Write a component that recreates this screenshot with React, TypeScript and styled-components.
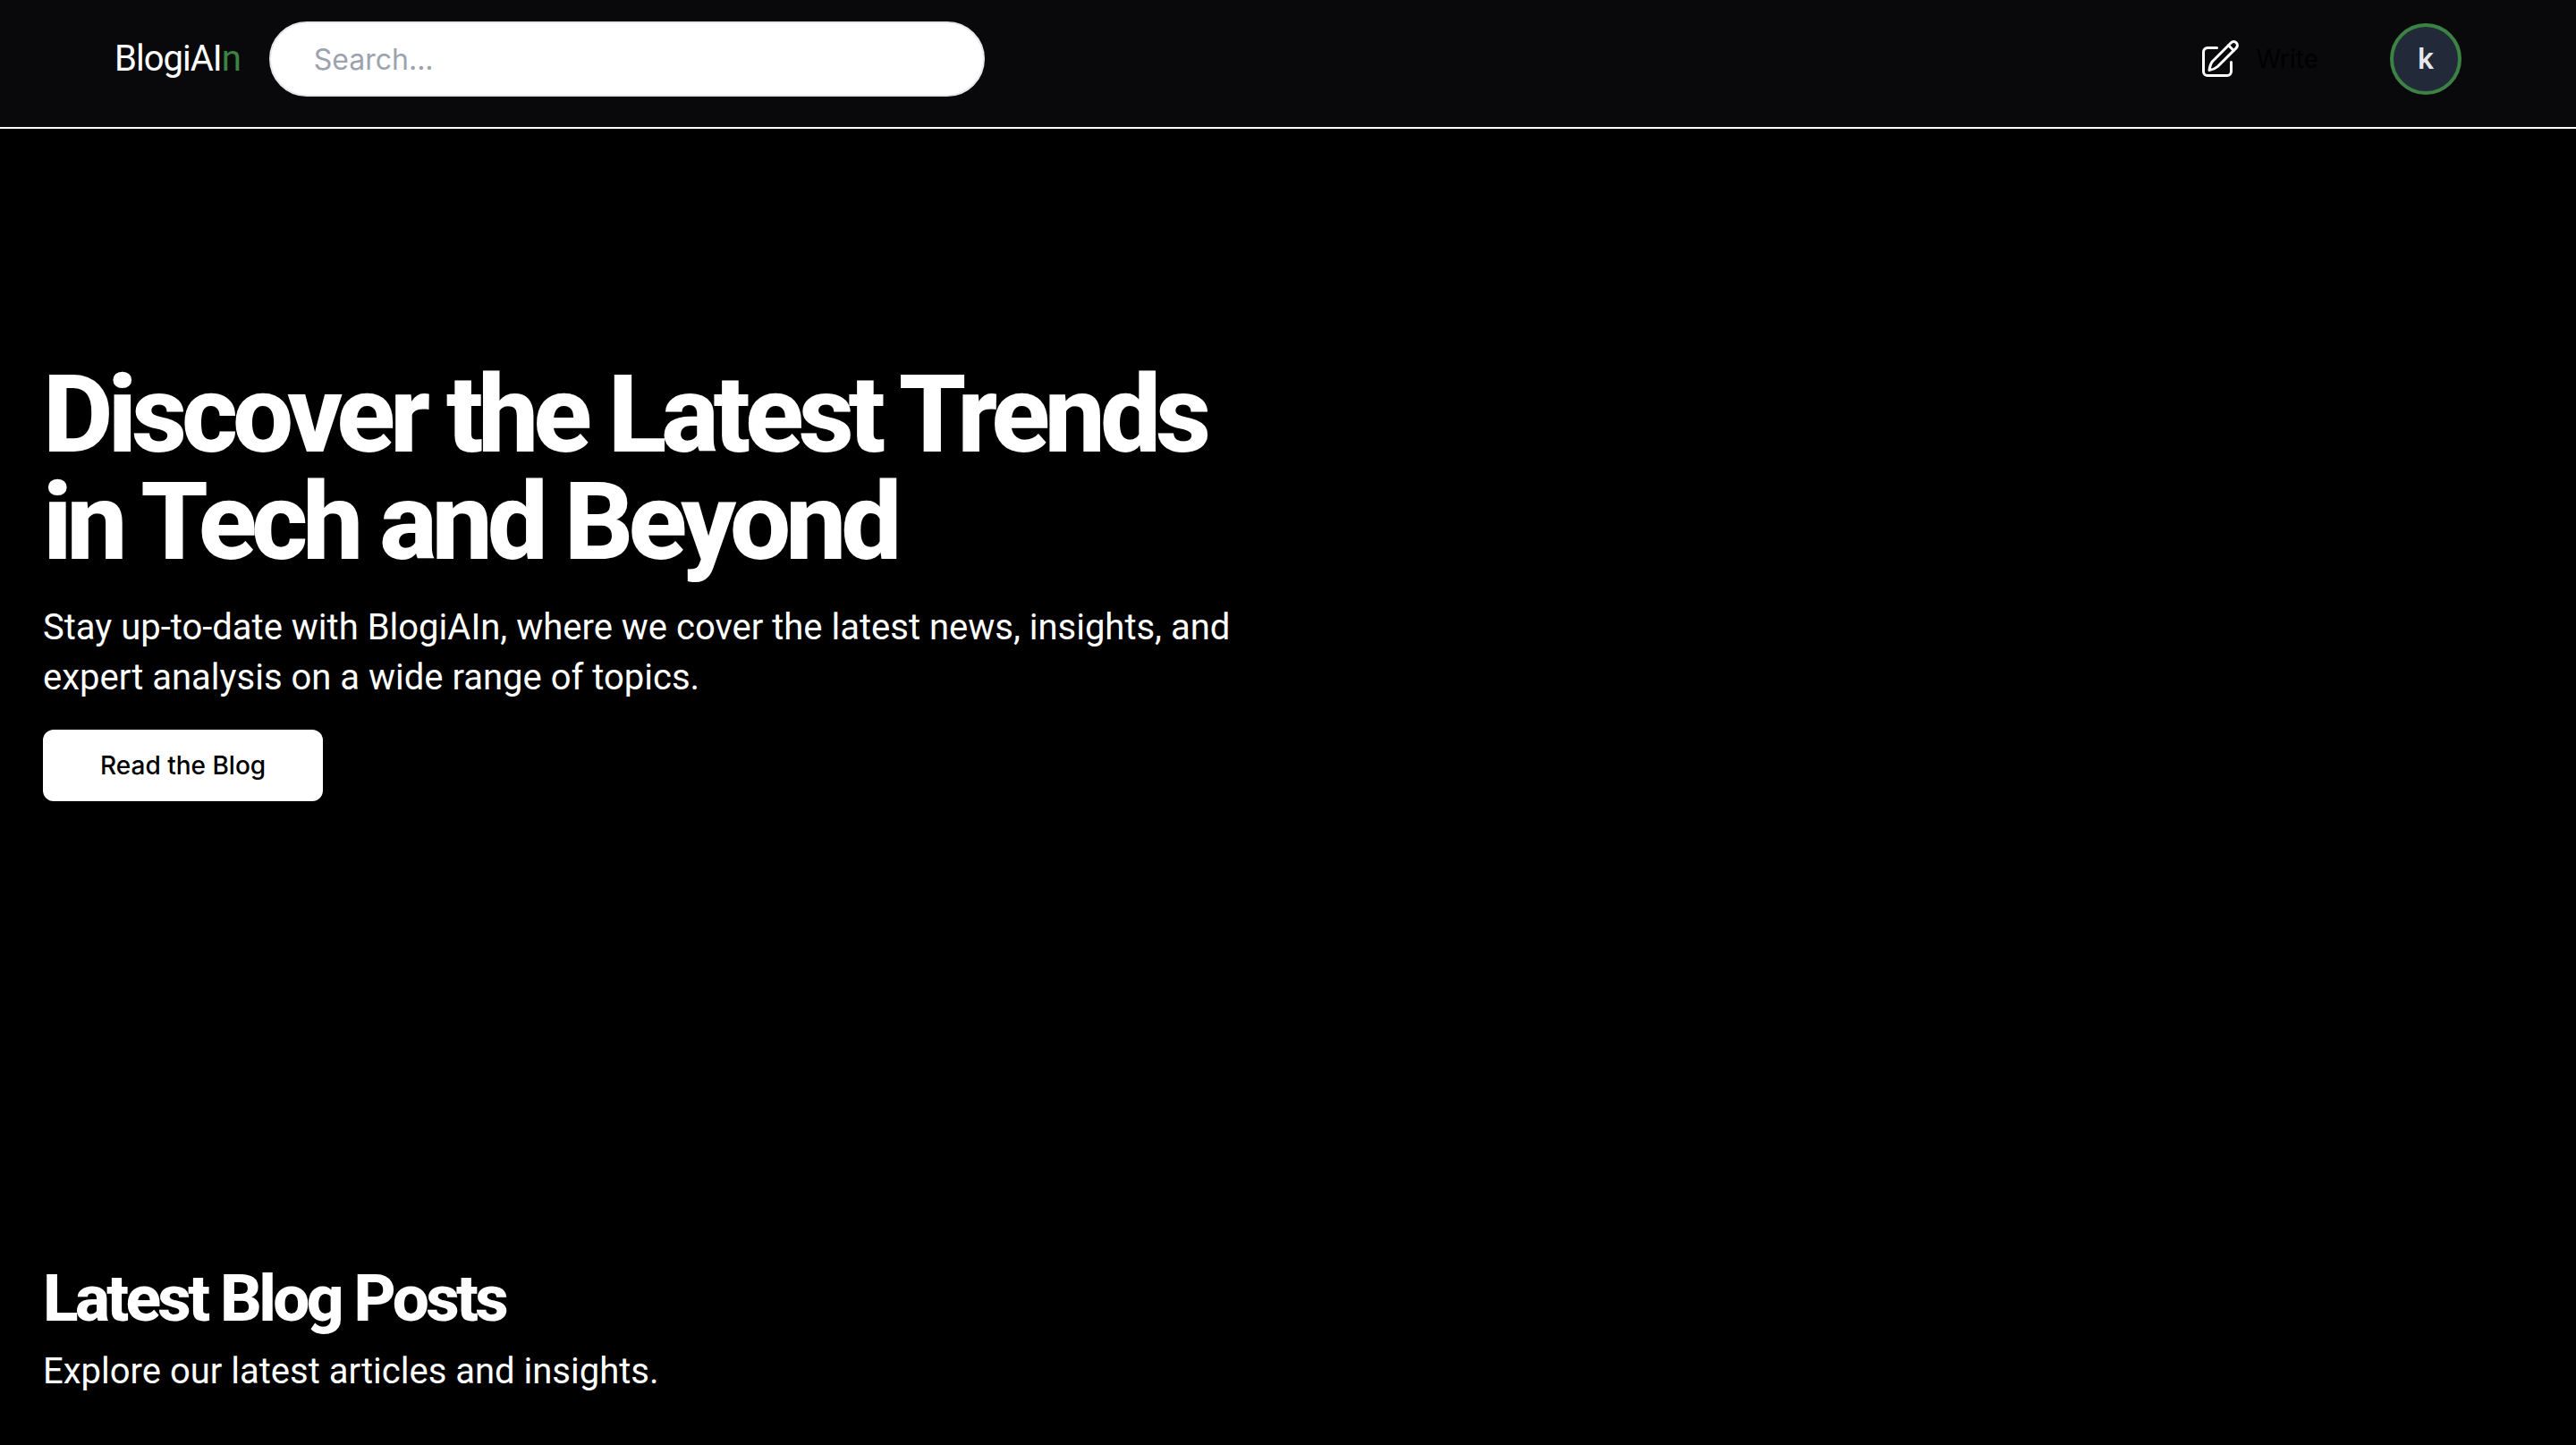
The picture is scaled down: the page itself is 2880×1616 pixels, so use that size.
import React from "react";
import styled, { createGlobalStyle } from "styled-components";

const Global = createGlobalStyle`
  *, *::before, *::after { box-sizing: border-box; }
  body {
    margin: 0;
    background: #000;
    color: #fff;
    font-family: Inter, "Liberation Sans", sans-serif;
  }
  h1, h2, p { margin: 0; }
  button, input { font: inherit; }
`;

const displayFont = `Roboto, "Liberation Sans", sans-serif`;

const Header = styled.header`
  display: flex;
  align-items: flex-start;
  justify-content: space-between;
  height: 144px;
  padding: 24px 128px 0;
  background: #09090b;
  border-bottom: 2px solid #fff;
`;

const Group = styled.div<{ $gap: number }>`
  display: flex;
  align-items: center;
  gap: ${(p) => p.$gap}px;
  height: 84px;
`;

const Logo = styled.a`
  color: #fff;
  font-family: ${displayFont};
  font-size: 40px;
  font-weight: 400;
  line-height: 56px;
  text-decoration: none;
  letter-spacing: -0.025em;
`;

const LogoAccent = styled.span`
  color: #3d8245;
`;

const SearchInput = styled.input`
  width: 800px;
  height: 84px;
  padding: 0 48px;
  border: 2px solid #e5e7eb;
  border-radius: 42px;
  background: #fff;
  color: #09090b;
  font-size: 32px;
  line-height: 48px;
  outline: none;
  &::placeholder {
    color: #9ca3af;
    opacity: 1;
  }
`;

const WriteLink = styled.a`
  display: flex;
  align-items: center;
  gap: 16px;
  color: #000;
  font-size: 28px;
  line-height: 40px;
  text-decoration: none;
`;

const Avatar = styled.button`
  display: flex;
  align-items: center;
  justify-content: center;
  width: 80px;
  height: 80px;
  padding: 0;
  border: 4px solid #3d8245;
  border-radius: 50%;
  background: #222938;
  color: #e5e7eb;
  font-size: 32px;
  font-weight: 600;
  line-height: 48px;
`;

const Hero = styled.section`
  display: flex;
  flex-direction: column;
  align-items: flex-start;
  gap: 30px;
  padding: 260px 48px 256px;
`;

const HeroText = styled.div`
  display: flex;
  flex-direction: column;
  gap: 30px;
`;

const Title = styled.h1`
  max-width: 1400px;
  font-family: ${displayFont};
  font-size: 121px;
  font-weight: 800;
  line-height: 120px;
  letter-spacing: -0.05em;
`;

const Lead = styled.p`
  max-width: 1400px;
  font-family: ${displayFont};
  font-size: 40px;
  line-height: 56px;
`;

const ReadButton = styled.button`
  height: 80px;
  padding: 0 64px;
  border: 0;
  border-radius: 12px;
  background: #fff;
  color: #000;
  font-size: 28px;
  font-weight: 500;
  line-height: 40px;
`;

const Posts = styled.section`
  display: flex;
  flex-direction: column;
  gap: 14px;
  padding: 260px 48px 0;
`;

const SectionTitle = styled.h2`
  font-family: ${displayFont};
  font-size: 73px;
  font-weight: 800;
  line-height: 80px;
  letter-spacing: -0.05em;
`;

const WriteIcon = () => (
  <svg width="48" height="48" viewBox="-1 0 48 48" fill="none" stroke="#fff" strokeWidth="3" strokeLinecap="round" strokeLinejoin="round" aria-hidden="true">
    <path d="M19.5 11.5H9A4.5 4.5 0 0 0 4.5 16V38A4.5 4.5 0 0 0 9 42.5H31A4.5 4.5 0 0 0 35.5 38V27.5" />
    <path d="M35.4 5.8A4.1 4.1 0 0 1 41.2 11.6L20.3 32.5C17.5 35 14.5 36 11 36.5C11.5 33 12.2 29.5 14.5 26.7Z" />
    <path d="M32.5 8.7L38.3 14.5" />
  </svg>
);

export default function App() {
  return (
    <>
      <Global />
      <Header>
        <Group $gap={32}>
          <Logo href="#">
            BlogiAI<LogoAccent>n</LogoAccent>
          </Logo>
          <SearchInput type="search" placeholder="Search..." aria-label="Search" />
        </Group>
        <Group $gap={80}>
          <WriteLink href="#write">
            <WriteIcon />
            Write
          </WriteLink>
          <Avatar type="button" aria-label="Account k">k</Avatar>
        </Group>
      </Header>
      <main>
        <Hero>
          <HeroText>
            <Title>Discover the Latest Trends in Tech and Beyond</Title>
            <Lead>
              Stay up-to-date with BlogiAIn, where we cover the latest news, insights, and expert analysis on a wide range of topics.
            </Lead>
          </HeroText>
          <ReadButton type="button">Read the Blog</ReadButton>
        </Hero>
        <Posts>
          <SectionTitle>Latest Blog Posts</SectionTitle>
          <Lead>Explore our latest articles and insights.</Lead>
        </Posts>
      </main>
    </>
  );
}
